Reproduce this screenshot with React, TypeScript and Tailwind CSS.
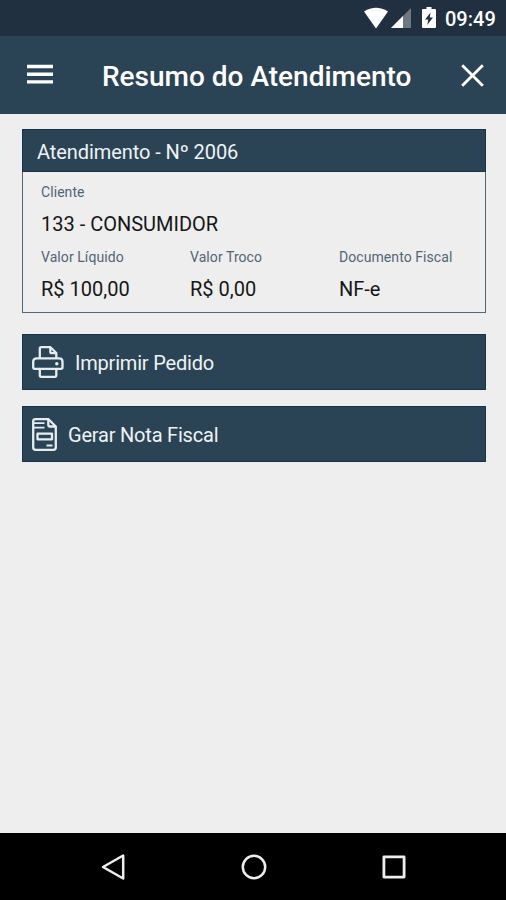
import type { ReactNode } from 'react';

interface FieldProps {
    label: string;
    value: string;
}

interface ActionButtonProps {
    icon: ReactNode;
    label: string;
    className?: string;
}

const StatusBar = () => {
    return (
        <div className="flex h-9 items-start bg-[#213040] pl-[364px] pt-[7px] text-white">
            <svg className="h-[22px] w-6 shrink-0" viewBox="0 0 24 22" fill="currentColor">
                <path d="M0 4.5Q12-3 24 4.5L12 21.5Z" />
            </svg>
            <svg className="ml-[3px] h-[22px] w-5 shrink-0" viewBox="0 0 20 22" fill="currentColor">
                <path d="M0 21L20 1V21Z" opacity=".35" />
                <path d="M0 21L12 9V21Z" />
            </svg>
            <svg className="ml-[11px] h-[22px] w-[14px] shrink-0" viewBox="0 0 14 22">
                <path d="M4.5 0h5v2H13q1 0 1 1v17q0 1-1 1H1q-1 0-1-1V3q0-1 1-1h3.5Z" fill="#fff" />
                <path d="M8.6 5.5L3 12.5h3.3L5.2 18L11 10.5H7.7Z" fill="#213040" />
            </svg>
            <span className="ml-[9px] text-[20px] font-medium leading-6">09:49</span>
        </div>
    );
};

const Header = () => {
    return (
        <header className="flex h-[78px] items-center bg-[#2b4455] pl-[27px] pr-[22px] text-white">
            <svg className="mb-[2px] h-5 w-[26px]" viewBox="0 0 26 20" stroke="currentColor" strokeWidth="3.4">
                <path d="M0 2.5H26M0 10.2H26M0 17.9H26" />
            </svg>
            <h1 className="ml-[49px] whitespace-nowrap text-[28px] font-medium leading-8 mt-1">Resumo do Atendimento</h1>
            <svg className="ml-auto h-[23px] w-[23px]" viewBox="0 0 23 23" stroke="currentColor" strokeWidth="2.8">
                <path d="M1.2 1.2L21.8 21.8M21.8 1.2L1.2 21.8" />
            </svg>
        </header>
    );
};

const Field = ({ label, value }: FieldProps) => {
    return (
        <div className="h-[65px] whitespace-nowrap">
            <p className="text-[14px] leading-5 tracking-[0.07px] text-[#526575]">{label}</p>
            <p className="mt-[10px] text-[20px] leading-6 text-[#161616]">{value}</p>
        </div>
    );
};

const ActionButton = ({ icon, label, className = '' }: ActionButtonProps) => {
    return (
        <button className={`flex h-14 w-full items-center border border-[#18324a] bg-[#2b4455] pl-[9px] text-[20px] text-[#f0f3f5] ${className}`}>
            {icon}
            <span className="mt-[2px] whitespace-nowrap leading-6 tracking-[-0.2px]">{label}</span>
        </button>
    );
};

const PrinterIcon = () => {
    return (
        <svg className="mr-[11px] h-8 w-8 shrink-0" viewBox="0 0 32 32" fill="none" stroke="#e6edf2" strokeWidth="2.3" strokeLinejoin="round">
            <path d="M7.8 12V2.8Q7.8 1.2 9.3 1.2H18.5L24.3 7V12" />
            <path d="M18.3 1.5V5.8Q18.3 7.2 19.8 7.2H24" />
            <path d="M7.8 22.8H2.8Q1.2 22.8 1.2 21.3V15.7Q1.2 12.3 4.7 12.3H27.3Q30.5 12.3 30.5 15.7V21.3Q30.5 22.8 29 22.8H24.3" />
            <path d="M7.8 22.8H24.3V29.2Q24.3 30.8 22.8 30.8H9.3Q7.8 30.8 7.8 29.2Z" />
            <circle cx="24.8" cy="17.8" r="1.7" fill="#e6edf2" stroke="none" />
        </svg>
    );
};

const InvoiceIcon = () => {
    return (
        <svg className="mr-[11px] h-[33px] w-[25px] shrink-0" viewBox="0 0 25 33" fill="none" stroke="#e6edf2" strokeWidth="2.3" strokeLinejoin="round">
            <path d="M3.5 1.2H16.5L23.8 8.5V29.5Q23.8 31.8 21.5 31.8H3.5Q1.2 31.8 1.2 29.5V3.5Q1.2 1.2 3.5 1.2Z" />
            <path d="M16.3 1.5V6.8Q16.3 8.5 18 8.5H23.5" />
            <path d="M2 5.2H12.5M2 9.6H12.5" strokeWidth="1.8" />
            <path d="M5.5 15.7H20V21.3H5.5Z" />
            <path d="M14.5 27.5H20.5" strokeWidth="2" />
        </svg>
    );
};

const NavigationBar = () => {
    return (
        <nav className="flex h-[67px] items-center bg-black pl-[101px] text-[#eee]">
            <svg className="h-7 w-6" viewBox="0 0 24 28" fill="none" stroke="currentColor" strokeWidth="2.5" strokeLinejoin="round">
                <path d="M22.2 2.5V25.5L2 14Z" />
            </svg>
            <svg className="ml-[116px] h-[26px] w-[26px]" viewBox="0 0 26 26" fill="none" stroke="currentColor" strokeWidth="2.5">
                <circle cx="13" cy="13" r="11.2" />
            </svg>
            <svg className="ml-[115px] h-6 w-6" viewBox="0 0 24 24" fill="none" stroke="currentColor" strokeWidth="2.8" strokeLinejoin="round">
                <path d="M1.9 1.9H22.1V22.1H1.9Z" />
            </svg>
        </nav>
    );
};

const App = () => {
    return (
        <div className="flex h-[900px] w-[506px] flex-col overflow-hidden bg-[#eee] font-['Roboto',sans-serif]">
            <StatusBar />
            <Header />
            <main className="flex-1 pl-[22px] pr-5 pt-[15px]">
                <section className="h-[184px] border border-[#536777]">
                    <h2 className="-mx-px -mt-px h-[43px] border border-[#18324a] bg-[#2b4455] pl-[14px] pt-[10px] text-[20px] leading-6 tracking-[-0.08px] text-[#f0f3f5]">
                        Atendimento - Nº 2006
                    </h2>
                    <div className="grid grid-cols-[149px_149px_1fr] pl-[18px] pt-[10px]">
                        <div className="col-span-3">
                            <Field label="Cliente" value="133 - CONSUMIDOR" />
                        </div>
                        <Field label="Valor Líquido" value="R$ 100,00" />
                        <Field label="Valor Troco" value="R$ 0,00" />
                        <Field label="Documento Fiscal" value="NF-e" />
                    </div>
                </section>
                <ActionButton className="mt-[21px]" icon={<PrinterIcon />} label="Imprimir Pedido" />
                <ActionButton className="mt-4" icon={<InvoiceIcon />} label="Gerar Nota Fiscal" />
            </main>
            <NavigationBar />
        </div>
    );
};

export default App;
